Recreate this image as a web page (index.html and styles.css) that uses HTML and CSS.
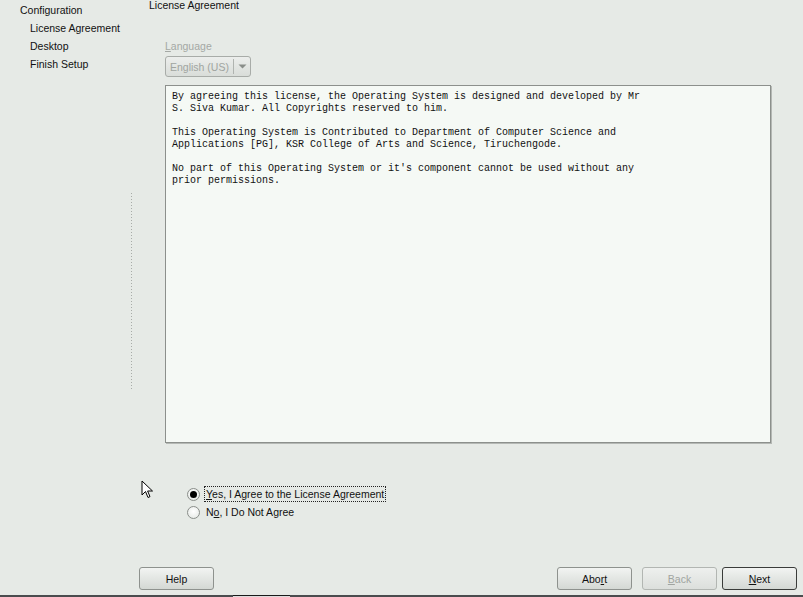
FILE: index.html
```html
<!DOCTYPE html>
<html>
<head>
<meta charset="utf-8">
<link rel="stylesheet" href="styles.css">
</head>
<body>
<div class="screen">
  <div class="top">
    <aside class="sidebar">
      <ul class="steps">
        <li class="step-root">Configuration</li>
        <li class="step">License Agreement</li>
        <li class="step">Desktop</li>
        <li class="step">Finish Setup</li>
      </ul>
      <div class="dots"></div>
    </aside>
    <main class="main">
      <div class="title">License Agreement</div>
      <div class="content">
        <div class="lang-label"><u>L</u>anguage</div>
        <div class="combo">
          <span class="combo-text">English (US)</span>
          <span class="combo-btn"><svg width="9" height="5" viewBox="0 0 9 5"><path d="M0.5 0.5 L8.5 0.5 L4.5 4.5 Z" fill="#8a8e8a"/></svg></span>
        </div>
        <div class="license">By agreeing this license, the Operating System is designed and developed by Mr
S. Siva Kumar. All Copyrights reserved to him.

This Operating System is Contributed to Department of Computer Science and
Applications [PG], KSR College of Arts and Science, Tiruchengode.

No part of this Operating System or it's component cannot be used without any
prior permissions.</div>
        <div class="radios">
          <label class="radio-row">
            <span class="radio checked"></span>
            <span class="radio-label focus"><u>Y</u>es, I Agree to the License Agreement</span>
          </label>
          <label class="radio-row">
            <span class="radio"></span>
            <span class="radio-label">N<u>o</u>, I Do Not Agree</span>
          </label>
        </div>
      </div>
    </main>
  </div>
  <div class="buttons">
    <button class="btn">Help</button>
    <div class="spacer"></div>
    <button class="btn">Abo<u>r</u>t</button>
    <button class="btn disabled"><u>B</u>ack</button>
    <button class="btn default"><u>N</u>ext</button>
  </div>
  <div class="taskbar"><span class="task-seg"></span></div>
  <svg class="cursor" width="13" height="20" viewBox="0 0 13 20">
    <path d="M1 1 L1 15 L4.5 11.5 L7 17.5 L9 16.6 L6.6 11 L11.5 11 Z" fill="#ffffff" stroke="#000000" stroke-width="1" stroke-linejoin="miter"/>
  </svg>
</div>
</body>
</html>
```

FILE: styles.css
```css
* { box-sizing: border-box; }
html, body { margin: 0; padding: 0; }
body {
  background: #e6eae6;
  font-family: "Liberation Sans", Arial, sans-serif;
  font-size: 10.5px;
  color: #111;
}
.screen {
  position: relative;
  width: 803px;
  height: 597px;
  display: flex;
  flex-direction: column;
  overflow: hidden;
}
.top {
  display: flex;
  flex: 1;
}
.sidebar {
  width: 149px;
  flex: none;
  display: flex;
  flex-direction: column;
}
.steps {
  list-style: none;
  margin: 0;
  padding: 1px 0 0 0;
}
.steps li {
  height: 18px;
  line-height: 18px;
  white-space: nowrap;
}
.step-root { padding-left: 20px; }
.step { padding-left: 30px; }
.dots {
  margin: 120px 0 0 131px;
  width: 1px;
  height: 198px;
  background: repeating-linear-gradient(to bottom, #a8aca8 0, #a8aca8 1px, transparent 1px, transparent 3px);
}
.main {
  flex: 1;
  display: flex;
  flex-direction: column;
}
.title {
  height: 11px;
  line-height: 11px;
  white-space: nowrap;
}
.content {
  padding-left: 16px;
  display: flex;
  flex-direction: column;
}
.lang-label {
  margin-top: 29px;
  height: 12px;
  line-height: 12px;
  color: #a4a8a4;
}
.combo {
  margin-top: 4px;
  width: 86px;
  height: 21px;
  border: 1px solid #a8aca8;
  border-radius: 3px;
  background: linear-gradient(#eceeec, #d9ddd9);
  display: flex;
  align-items: center;
}
.combo-text {
  padding-left: 4px;
  width: 67px;
  color: #a0a4a0;
  font-size: 10.5px;
  white-space: nowrap;
}
.combo-btn {
  flex: 1;
  height: 15px;
  border-left: 1px solid #b0b4b0;
  display: flex;
  align-items: center;
  justify-content: center;
}
.license {
  margin-top: 8px;
  width: 606px;
  height: 358px;
  border: 1px solid #8c908c;
  box-shadow: 1px 1px 0 #b4b8b4;
  background: #f5f9f5;
  padding: 5px 6px;
  font-family: "Liberation Mono", "Courier New", monospace;
  font-size: 10px;
  line-height: 12px;
  white-space: pre;
  color: #111;
}
.radios {
  margin-top: 42px;
  padding-left: 22px;
  display: flex;
  flex-direction: column;
}
.radio-row {
  display: flex;
  align-items: center;
  height: 18px;
}
.radio {
  width: 13px;
  height: 13px;
  border-radius: 50%;
  border: 1px solid #8a8e8a;
  background: radial-gradient(circle at 50% 40%, #ffffff, #e2e6e2);
  display: flex;
  align-items: center;
  justify-content: center;
  margin-right: 4px;
}
.radio.checked::after {
  content: "";
  width: 7px;
  height: 7px;
  border-radius: 50%;
  background: #000;
}
.radio-label {
  padding: 1px 1px;
  line-height: 12px;
  border: 1px solid transparent;
  white-space: nowrap;
}
.radio-label.focus {
  border: 1px dotted #222;
}
.buttons {
  display: flex;
  align-items: center;
  padding: 0 6px 0 139px;
  height: 23px;
  margin-bottom: 5px;
  gap: 10px;
}
.spacer { flex: 1; }
.btn {
  width: 75px;
  height: 23px;
  border: 1px solid #8e928e;
  border-radius: 3px;
  background: linear-gradient(#f2f4f2, #d4d8d4);
  font-family: "Liberation Sans", Arial, sans-serif;
  font-size: 10.5px;
  color: #111;
  padding: 0;
}
.btn.disabled {
  color: #a0a4a0;
  border-color: #b2b6b2;
  background: linear-gradient(#eef0ee, #dcdfdc);
}
.btn.default {
  border-color: #3a3c3a;
  margin-left: -5px;
}
.taskbar {
  height: 2px;
  background: #4a4c4e;
  position: relative;
}
.task-seg {
  position: absolute;
  left: 233px;
  top: 0;
  width: 57px;
  height: 2px;
  background: #1a1a1a;
  border-bottom: 1px solid #dcdcdc;
}
.cursor {
  position: absolute;
  left: 141px;
  top: 480px;
}
```
